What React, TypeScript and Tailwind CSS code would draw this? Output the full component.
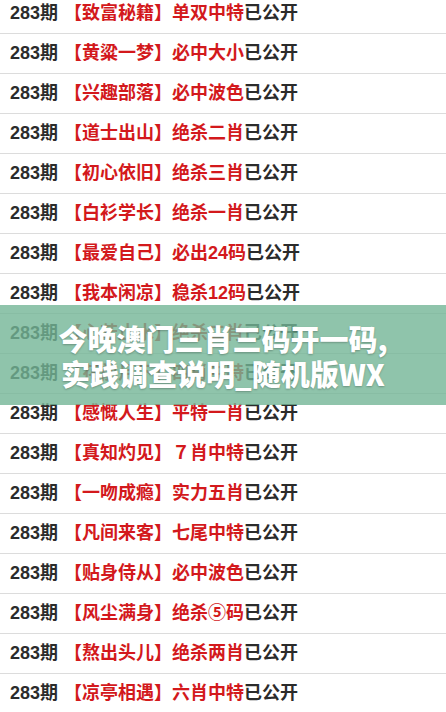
import React from 'react';

// 每期推荐列表
const rows = [
  { name: '致富秘籍', tip: '单双中特' },
  { name: '黄粱一梦', tip: '必中大小' },
  { name: '兴趣部落', tip: '必中波色' },
  { name: '道士出山', tip: '绝杀二肖' },
  { name: '初心依旧', tip: '绝杀三肖' },
  { name: '白衫学长', tip: '绝杀一肖' },
  { name: '最爱自己', tip: '必出24码' },
  { name: '我本闲凉', tip: '稳杀12码' },
  { name: '心若止水', tip: '绝杀二肖' },
  { name: '花前月下', tip: '四肖中特' },
  { name: '感慨人生', tip: '平特一肖' },
  { name: '真知灼见', tip: '７肖中特' },
  { name: '一吻成瘾', tip: '实力五肖' },
  { name: '凡间来客', tip: '七尾中特' },
  { name: '贴身侍从', tip: '必中波色' },
  { name: '风尘满身', tip: '绝杀⑤码' },
  { name: '熬出头儿', tip: '绝杀两肖' },
  { name: '凉亭相遇', tip: '六肖中特' },
];

export default function App() {
  return (
    <div
      className="relative w-[446px] h-[712px] overflow-hidden bg-white"
      style={{ fontFamily: '"Liberation Sans", "Noto Sans CJK SC", sans-serif' }}
    >
      <div className="-mt-[6px]">
        {rows.map((row, i) => (
          <div
            key={i}
            className="h-[40px] flex items-center pl-[10px] border-b border-[#dcdcdc] text-[18px] font-bold whitespace-nowrap"
          >
            <span className="text-[#2b2b2b]">283期</span>
            <span className="ml-[6px] text-[#d3191c]">【{row.name}】{row.tip}</span>
            <span className="text-[#2b2b2b]">已公开</span>
          </div>
        ))}
      </div>

      {/* 标题遮罩 */}
      <div className="absolute left-0 right-0 top-[305px] h-[100px] bg-[rgba(115,181,150,0.8)] flex flex-col items-center justify-center pt-[2px]">
        <p
          className="text-white text-[29px] font-black leading-[35px] text-center [text-shadow:0_1px_2px_rgba(0,0,0,0.25)]"
          style={{ fontFamily: '"Noto Sans CJK SC", "DejaVu Sans", sans-serif' }}
        >
          今晚澳门三肖三码开一码,
          <br />
          实践调查说明_随机版WX
        </p>
      </div>
    </div>
  );
}
